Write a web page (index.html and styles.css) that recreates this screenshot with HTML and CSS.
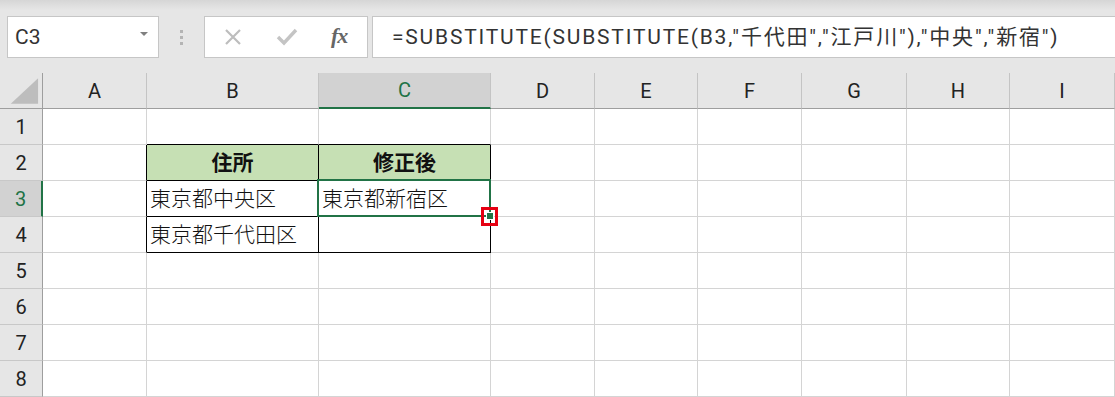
FILE: index.html
```html
<!DOCTYPE html>
<html lang="ja">
<head>
    <meta charset="UTF-8">
    <title>SUBSTITUTE - Sheet1</title>
    <link rel="stylesheet" href="styles.css">
</head>
<body>
    <div class="formula-bar">
        <div class="name-box">
            <span>C3</span>
            <span class="caret"></span>
        </div>
        <div class="grip"><i></i><i></i><i></i></div>
        <div class="fx-tools">
            <svg class="tool" width="20" height="20" viewBox="0 0 20 20">
                <path d="M3 3 L17 17 M17 3 L3 17" stroke="#bdbdbd" stroke-width="2.2" fill="none"/>
            </svg>
            <svg class="tool" width="22" height="20" viewBox="0 0 22 20">
                <path d="M2 10 L8 16 L20 3" stroke="#c4c4c4" stroke-width="3.4" fill="none"/>
            </svg>
            <span class="fx">fx</span>
        </div>
        <div class="formula">=SUBSTITUTE(SUBSTITUTE(B3,"千代田","江戸川"),"中央","新宿")</div>
    </div>

    <div class="sheet">
        <!-- column headers -->
        <div class="hd corner">
            <svg width="43" height="36" viewBox="0 0 43 36">
                <polygon points="11,31 39,31 39,5" fill="#bdbdbd"/>
            </svg>
        </div>
        <div class="hd col">A</div>
        <div class="hd col">B</div>
        <div class="hd col active-col">C</div>
        <div class="hd col">D</div>
        <div class="hd col">E</div>
        <div class="hd col">F</div>
        <div class="hd col">G</div>
        <div class="hd col">H</div>
        <div class="hd col">I</div>

        <!-- row 1 -->
        <div class="hd row">1</div>
        <div class="cell"></div>
        <div class="cell edge-b"></div>
        <div class="cell edge-b"></div>
        <div class="cell"></div>
        <div class="cell"></div>
        <div class="cell"></div>
        <div class="cell"></div>
        <div class="cell"></div>
        <div class="cell"></div>

        <!-- row 2 -->
        <div class="hd row">2</div>
        <div class="cell edge-r"></div>
        <div class="cell boxed title">住所</div>
        <div class="cell boxed title">修正後</div>
        <div class="cell"></div>
        <div class="cell"></div>
        <div class="cell"></div>
        <div class="cell"></div>
        <div class="cell"></div>
        <div class="cell"></div>

        <!-- row 3 -->
        <div class="hd row active-row">3</div>
        <div class="cell edge-r"></div>
        <div class="cell boxed">東京都中央区</div>
        <div class="cell boxed selected">東京都新宿区
            <span class="handle-mark"></span>
            <span class="handle"></span>
        </div>
        <div class="cell"></div>
        <div class="cell"></div>
        <div class="cell"></div>
        <div class="cell"></div>
        <div class="cell"></div>
        <div class="cell"></div>

        <!-- row 4 -->
        <div class="hd row">4</div>
        <div class="cell edge-r"></div>
        <div class="cell boxed">東京都千代田区</div>
        <div class="cell boxed"></div>
        <div class="cell"></div>
        <div class="cell"></div>
        <div class="cell"></div>
        <div class="cell"></div>
        <div class="cell"></div>
        <div class="cell"></div>

        <!-- rows 5-8 -->
        <div class="hd row">5</div>
        <div class="cell"></div><div class="cell"></div><div class="cell"></div><div class="cell"></div>
        <div class="cell"></div><div class="cell"></div><div class="cell"></div><div class="cell"></div><div class="cell"></div>

        <div class="hd row">6</div>
        <div class="cell"></div><div class="cell"></div><div class="cell"></div><div class="cell"></div>
        <div class="cell"></div><div class="cell"></div><div class="cell"></div><div class="cell"></div><div class="cell"></div>

        <div class="hd row">7</div>
        <div class="cell"></div><div class="cell"></div><div class="cell"></div><div class="cell"></div>
        <div class="cell"></div><div class="cell"></div><div class="cell"></div><div class="cell"></div><div class="cell"></div>

        <div class="hd row">8</div>
        <div class="cell"></div><div class="cell"></div><div class="cell"></div><div class="cell"></div>
        <div class="cell"></div><div class="cell"></div><div class="cell"></div><div class="cell"></div><div class="cell"></div>
    </div>
</body>
</html>
```

FILE: styles.css
```css
body {
    margin: 0;
    font-family: Roboto, "Noto Sans CJK JP", sans-serif;
    background-color: #ffffff;
    overflow: hidden;
}

/* formula bar */
.formula-bar {
    height: 73px;
    box-sizing: border-box;
    padding: 16px 0 0 7px;
    display: flex;
    align-items: flex-start;
    background: linear-gradient(#d6d6d6, #e6e6e6 10px);
}
.name-box {
    width: 152px;
    height: 42px;
    box-sizing: border-box;
    border: 1px solid #c6c6c6;
    background-color: #ffffff;
    display: flex;
    align-items: center;
    justify-content: space-between;
    padding: 0 10px 0 7px;
    font-size: 21px;
    color: #333333;
}
.caret {
    width: 0;
    height: 0;
    border-left: 4px solid transparent;
    border-right: 4px solid transparent;
    border-top: 4px solid #808080;
    margin-top: -6px;
}
.grip {
    width: 45px;
    height: 42px;
    display: flex;
    flex-direction: column;
    align-items: center;
    justify-content: center;
    gap: 3px;
}
.grip i {
    width: 3px;
    height: 3px;
    background-color: #b4b4b4;
}
.fx-tools {
    width: 164px;
    height: 42px;
    box-sizing: border-box;
    border: 1px solid #c6c6c6;
    background-color: #ffffff;
    display: flex;
    align-items: center;
    padding-left: 18px;
    gap: 33px;
}
.fx {
    font-family: "Liberation Serif", serif;
    font-style: italic;
    font-weight: bold;
    font-size: 22px;
    color: #666666;
    letter-spacing: -1px;
    margin-top: -2px;
}
.formula {
    flex: 1;
    height: 42px;
    margin-left: 4px;
    box-sizing: border-box;
    border: 1px solid #c6c6c6;
    border-right: none;
    background-color: #ffffff;
    padding: 0 0 4px 19px;
    display: flex;
    align-items: center;
    font-size: 21px;
    letter-spacing: 1.8px;
    color: #333333;
    white-space: nowrap;
}

/* sheet grid */
.sheet {
    display: grid;
    grid-template-columns: 43px 104px 172px 172px 104px 103px 104px 105px 103px 1fr;
    grid-auto-rows: 36px;
}
.hd {
    box-sizing: border-box;
    background-color: #e6e6e6;
    display: flex;
    align-items: center;
    justify-content: center;
    font-size: 20px;
    color: #222222;
}
.hd.col {
    border-right: 1px solid #c4c4c4;
    border-bottom: 1px solid #9e9e9e;
}
.hd.corner {
    border-right: 1px solid #9e9e9e;
    border-bottom: 1px solid #9e9e9e;
}
.hd.row {
    border-right: 1px solid #9e9e9e;
    border-bottom: 1px solid #c8c8c8;
}
.hd.active-col {
    background-color: #d2d2d2;
    color: #217346;
    border-bottom: 2px solid #217346;
}
.hd.active-row {
    background-color: #d2d2d2;
    color: #217346;
    border-right: 2px solid #217346;
}
.cell {
    box-sizing: border-box;
    border-right: 1px solid #d4d4d4;
    border-bottom: 1px solid #d4d4d4;
    display: flex;
    align-items: center;
    padding: 0 0 3px 3px;
    font-family: "Noto Sans CJK JP", sans-serif;
    font-size: 21px;
    font-weight: 300;
    color: #111111;
    white-space: nowrap;
}
.edge-b {
    border-bottom-color: #000000;
}
.edge-r {
    border-right-color: #000000;
}
.boxed {
    border-right-color: #000000;
    border-bottom-color: #000000;
}
.title {
    background-color: #c6e0b4;
    justify-content: center;
    padding-left: 0;
    font-weight: bold;
}

/* active cell */
.selected {
    position: relative;
}
.selected::after {
    content: "";
    position: absolute;
    left: -2px;
    top: -2px;
    right: -1px;
    bottom: -1px;
    border: 2px solid #217346;
}
.handle {
    position: absolute;
    right: -3px;
    bottom: -3px;
    width: 6px;
    height: 6px;
    background-color: #217346;
    outline: 1px solid #ffffff;
    z-index: 2;
}
.handle-mark {
    position: absolute;
    left: 162px;
    top: 26px;
    width: 17px;
    height: 19px;
    box-sizing: border-box;
    border: 3px solid #e60012;
    z-index: 3;
}
```
